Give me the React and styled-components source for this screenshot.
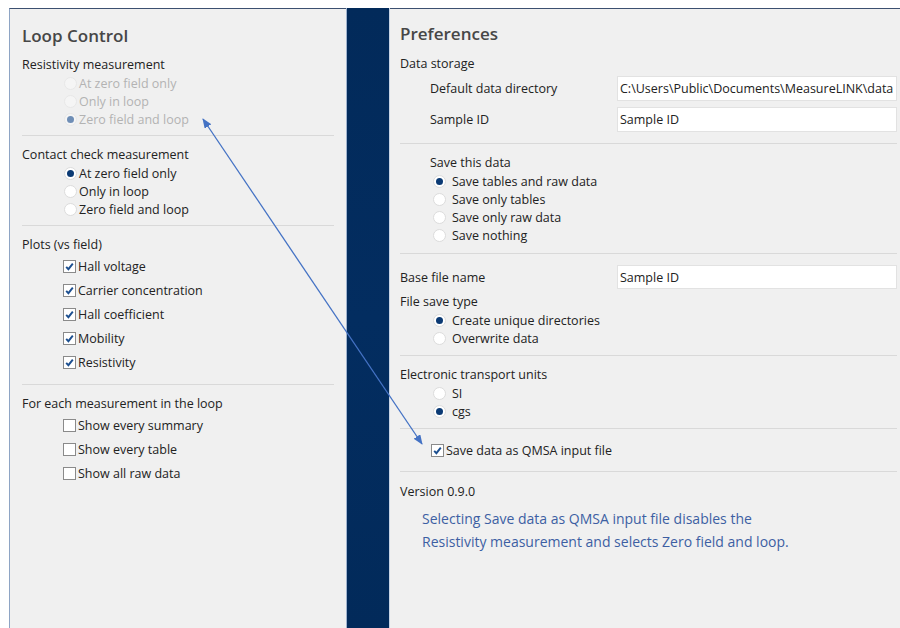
import React from "react";
import styled, { createGlobalStyle } from "styled-components";

const GlobalStyle = createGlobalStyle`
    body {
        margin: 0;
        background: #fff;
        font-family: "Open Sans", "Liberation Sans", sans-serif;
        color: #222;
    }
`;

const Screen = styled.div`
    position: relative;
    width: 900px;
    height: 628px;
    padding: 8px 0 0 9px;
    box-sizing: border-box;
    display: flex;
    overflow: hidden;
`;

const Panel = styled.div`
    background: #f0f0f0;
    border-top: 1px solid #3c5070;
    box-sizing: border-box;
    display: flex;
    flex-direction: column;
`;

const LeftPanel = styled(Panel)`
    width: 337px;
    border-left: 1px solid #8ea4c4;
    padding: 15px 12px 0 12px;
`;

const RightPanel = styled(Panel)`
    flex: 1;
    padding: 13px 3px 0 10px;
`;

const Stripe = styled.div`
    width: 44px;
    background: linear-gradient(180deg, #022a5a 0%, #032d60 50%, #022a5a 100%);
    border-left: 1px solid #9fb3cf;
    border-right: 1px solid #c7d3e4;
    box-sizing: border-box;
`;

const Title = styled.h2`
    margin: 0;
    font-size: 17px;
    font-weight: 600;
    line-height: 24px;
    color: #474747;
`;

const Section = styled.div`
    padding: ${({ $pt }) => $pt ?? 10}px 0 ${({ $pb }) => $pb ?? 8}px;
    border-bottom: ${({ $last }) => ($last ? "none" : "1px solid #d9d9d9")};
`;

const Heading = styled.div`
    font-size: 12.5px;
    line-height: 18px;
    padding-left: ${({ $indent }) => $indent || 0}px;
    margin-top: ${({ $mt }) => $mt || 0}px;
`;

const Group = styled.div`
    display: flex;
    flex-direction: column;
    padding-left: ${({ $indent }) => $indent || 0}px;
`;

const OptionRow = styled.label`
    display: flex;
    align-items: center;
    height: ${({ $h }) => $h || 18}px;
    gap: ${({ $gap }) => $gap ?? 2}px;
    font-size: 12.5px;
    color: ${({ $disabled }) => ($disabled ? "#b3b3b3" : "#222")};
`;

const RadioCircle = styled.span`
    width: 13px;
    height: 13px;
    border-radius: 50%;
    box-sizing: border-box;
    background: ${({ $disabled }) => ($disabled ? "#f5f5f5" : "#fff")};
    border: 1px solid ${({ $disabled }) => ($disabled ? "#e8e8e8" : "#dcdcdc")};
    display: flex;
    align-items: center;
    justify-content: center;
    flex-shrink: 0;

    &::after {
        content: "";
        display: ${({ $checked }) => ($checked ? "block" : "none")};
        width: 7px;
        height: 7px;
        border-radius: 50%;
        background: ${({ $disabled }) => ($disabled ? "#6f8eb6" : "#0b3a74")};
    }
`;

const CheckBox = styled.span`
    width: 13px;
    height: 13px;
    box-sizing: border-box;
    background: #fff;
    border: 1px solid #8a8a8a;
    display: flex;
    align-items: center;
    justify-content: center;
    flex-shrink: 0;
`;

const FieldRow = styled.div`
    display: flex;
    align-items: center;
    height: ${({ $h }) => $h || 25}px;
    margin-top: ${({ $mt }) => $mt || 0}px;
    font-size: 12.5px;
`;

const FieldLabel = styled.span`
    width: ${({ $w }) => $w}px;
    padding-left: ${({ $indent }) => $indent || 0}px;
    box-sizing: border-box;
    flex-shrink: 0;
`;

const TextBox = styled.div`
    flex: 1;
    height: 100%;
    background: #fff;
    border: 1px solid #e2e2e2;
    box-sizing: border-box;
    padding: 0 2px;
    display: flex;
    align-items: center;
    white-space: nowrap;
    overflow: hidden;
    font-size: 12.5px;
    color: #222;
`;

const Version = styled.div`
    font-size: 12.5px;
    line-height: 18px;
`;

const Note = styled.p`
    margin: 6px 0 0;
    padding-left: 22px;
    font-size: 14px;
    line-height: 23px;
    color: #3d5fa3;
`;

const Overlay = styled.svg`
    position: absolute;
    left: 0;
    top: 0;
    pointer-events: none;
`;

const Radio = ({ label, checked, disabled, gap }) => (
    <OptionRow $disabled={disabled} $gap={gap}>
        <RadioCircle $checked={checked} $disabled={disabled} />
        {label}
    </OptionRow>
);

const Check = ({ label, checked, h = 24 }) => (
    <OptionRow $h={h}>
        <CheckBox>
            {checked && (
                <svg width="11" height="11" viewBox="0 0 11 11">
                    <path d="M2.2 5.8 L4.4 8.2 L8.8 2.6" fill="none" stroke="#1c4f90" strokeWidth="1.9" />
                </svg>
            )}
        </CheckBox>
        {label}
    </OptionRow>
);

const LoopControl = () => (
    <LeftPanel>
        <Title>Loop Control</Title>

        <Section $pt={8} $pb={7}>
            <Heading>Resistivity measurement</Heading>
            <Group $indent={42}>
                <Radio label="At zero field only" disabled />
                <Radio label="Only in loop" disabled />
                <Radio label="Zero field and loop" checked disabled />
            </Group>
        </Section>

        <Section $pb={7}>
            <Heading>Contact check measurement</Heading>
            <Group $indent={42}>
                <Radio label="At zero field only" checked />
                <Radio label="Only in loop" />
                <Radio label="Zero field and loop" />
            </Group>
        </Section>

        <Section $pb={10}>
            <Heading>Plots (vs field)</Heading>
            <Group $indent={41}>
                {["Hall voltage", "Carrier concentration", "Hall coefficient", "Mobility", "Resistivity"].map((p) => (
                    <Check key={p} label={p} checked />
                ))}
            </Group>
        </Section>

        <Section $last>
            <Heading>For each measurement in the loop</Heading>
            <Group $indent={41}>
                <Check label="Show every summary" />
                <Check label="Show every table" />
                <Check label="Show all raw data" />
            </Group>
        </Section>
    </LeftPanel>
);

const Preferences = () => (
    <RightPanel>
        <Title>Preferences</Title>

        <Section $pt={9} $pb={11}>
            <Heading>Data storage</Heading>
            <FieldRow $mt={3}>
                <FieldLabel $w={217} $indent={30}>Default data directory</FieldLabel>
                <TextBox>C:\Users\Public\Documents\MeasureLINK\data</TextBox>
            </FieldRow>
            <FieldRow $mt={6}>
                <FieldLabel $w={217} $indent={30}>Sample ID</FieldLabel>
                <TextBox>Sample ID</TextBox>
            </FieldRow>
        </Section>

        <Section $pb={9}>
            <Heading $indent={30}>Save this data</Heading>
            <Group $indent={33}>
                <Radio label="Save tables and raw data" checked gap={6} />
                <Radio label="Save only tables" gap={6} />
                <Radio label="Save only raw data" gap={6} />
                <Radio label="Save nothing" gap={6} />
            </Group>
        </Section>

        <Section $pt={11}>
            <FieldRow $h={24}>
                <FieldLabel $w={217}>Base file name</FieldLabel>
                <TextBox>Sample ID</TextBox>
            </FieldRow>
            <Heading $mt={4}>File save type</Heading>
            <Group $indent={33}>
                <Radio label="Create unique directories" checked gap={6} />
                <Radio label="Overwrite data" gap={6} />
            </Group>
        </Section>

        <Section>
            <Heading>Electronic transport units</Heading>
            <Group $indent={33}>
                <Radio label="SI" gap={6} />
                <Radio label="cgs" checked gap={6} />
            </Group>
        </Section>

        <Section $pt={9} $pb={9}>
            <Group $indent={31}>
                <Check label="Save data as QMSA input file" checked />
            </Group>
        </Section>

        <Section $pt={11} $last>
            <Version>Version 0.9.0</Version>
            <Note>
                Selecting Save data as QMSA input file disables the
                <br />
                Resistivity measurement and selects Zero field and loop.
            </Note>
        </Section>
    </RightPanel>
);

export default function App() {
    return (
        <>
            <GlobalStyle />
            <Screen>
                <LoopControl />
                <Stripe />
                <Preferences />

                {/* callout linking the QMSA checkbox to the resistivity options */}
                <Overlay width="900" height="628" viewBox="0 0 900 628">
                    <defs>
                        <marker id="head" viewBox="0 0 10 8" refX="9" refY="4" markerWidth="10" markerHeight="8"
                            markerUnits="userSpaceOnUse" orient="auto-start-reverse">
                            <path d="M0 0 L10 4 L0 8 Z" fill="#4472c4" />
                        </marker>
                    </defs>
                    <line x1="203" y1="119" x2="422" y2="444" stroke="#4472c4" strokeWidth="1.3"
                        markerStart="url(#head)" markerEnd="url(#head)" />
                </Overlay>
            </Screen>
        </>
    );
}
